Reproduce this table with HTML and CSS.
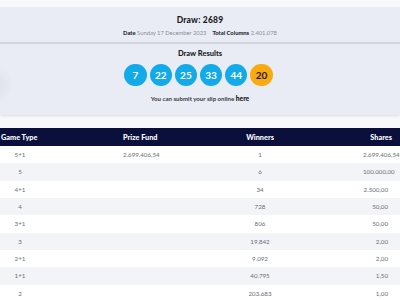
FILE: index.html
```html
<!DOCTYPE html>
<html>
<head>
<meta charset="utf-8">
<link rel="stylesheet" href="styles.css">
</head>
<body>
<section class="draw-panel">
  <h1 class="draw-title">Draw: 2689</h1>
  <p class="draw-meta"><b>Date</b> <span class="muted">Sunday 17 December 2023</span><span class="sep"></span><b>Total Columns</b> <span class="muted">2.401.078</span></p>
</section>
<section class="results-panel">
  <span class="edge-shadow"></span>
  <h2 class="results-title">Draw Results</h2>
  <div class="balls">
    <span class="ball">7</span>
    <span class="ball">22</span>
    <span class="ball">25</span>
    <span class="ball">33</span>
    <span class="ball">44</span>
    <span class="ball bonus">20</span>
  </div>
  <p class="submit">You can submit your slip online <a href="#">here</a></p>
</section>
<div class="table">
  <div class="row head">
    <span class="c1">Game Type</span><span class="c2">Prize Fund</span><span class="c3">Winners</span><span class="c4">Shares</span>
  </div>
  <div class="row"><span class="c1">5+1</span><span class="c2">2.699.406,54</span><span class="c3">1</span><span class="c4">2.699.406,54</span></div>
  <div class="row"><span class="c1">5</span><span class="c2"></span><span class="c3">6</span><span class="c4">100.000,00</span></div>
  <div class="row"><span class="c1">4+1</span><span class="c2"></span><span class="c3">34</span><span class="c4">2.500,00</span></div>
  <div class="row"><span class="c1">4</span><span class="c2"></span><span class="c3">728</span><span class="c4">50,00</span></div>
  <div class="row"><span class="c1">3+1</span><span class="c2"></span><span class="c3">806</span><span class="c4">50,00</span></div>
  <div class="row"><span class="c1">3</span><span class="c2"></span><span class="c3">19.842</span><span class="c4">2,00</span></div>
  <div class="row"><span class="c1">2+1</span><span class="c2"></span><span class="c3">9.092</span><span class="c4">2,00</span></div>
  <div class="row"><span class="c1">1+1</span><span class="c2"></span><span class="c3">40.795</span><span class="c4">1,50</span></div>
  <div class="row"><span class="c1">2</span><span class="c2"></span><span class="c3">203.683</span><span class="c4">1,00</span></div>
</div>
</body>
</html>
```

FILE: styles.css
```css
* { box-sizing: border-box; }
html, body { margin: 0; padding: 0; }
body {
  background: #f8f8fb;
  font-family: Lato, "Noto Sans", sans-serif;
  color: #1d1d24;
  width: 400px;
  height: 300px;
  overflow: hidden;
}
.draw-panel {
  margin-top: 7px;
  height: 37px;
  background: #e9ecf4;
  border-bottom: 2px solid #d2d5de;
  text-align: center;
  padding-top: 7px;
}
.draw-title {
  margin: 0;
  font-size: 8.5px;
  font-weight: 900;
  line-height: 12px;
  letter-spacing: 0.2px;
}
.draw-meta {
  margin: 3px 0 0;
  font-size: 5.8px;
  line-height: 8px;
  color: #2a2a33;
}
.draw-meta b { font-weight: 900; }
.muted { color: #8b8d96; }
.sep { display: inline-block; width: 6px; }
.results-panel {
  position: relative;
  height: 71px;
  background: #e9ecf4;
  box-shadow: 0 1px 2px rgba(40, 40, 60, 0.12);
  text-align: center;
  padding-top: 5px;
}
.edge-shadow {
  position: absolute;
  left: -15px;
  top: 28px;
  width: 22px;
  height: 26px;
  border-radius: 50%;
  background: rgba(200, 202, 210, 0.25);
  filter: blur(3px);
}
.results-title {
  margin: 0;
  font-size: 7.5px;
  font-weight: 900;
  line-height: 10px;
}
.balls {
  display: flex;
  justify-content: center;
  gap: 2.8px;
  margin-top: 5px;
  padding-right: 3px;
}
.ball {
  width: 22.4px;
  height: 22.4px;
  border-radius: 50%;
  background: #12aae9;
  color: #fff;
  font-size: 10px;
  font-weight: 700;
  display: flex;
  align-items: center;
  justify-content: center;
}
.ball.bonus { background: #f8aa10; color: #1b1b1b; }
.submit {
  margin: 8px 0 0;
  font-size: 6.1px;
  font-weight: 700;
  color: #3a3a44;
  line-height: 8px;
}
.submit a { color: #111; font-weight: 900; text-decoration: none; font-size: 6.7px; }
.table { margin-top: 13px; }
.row {
  display: grid;
  grid-template-columns: 40px 160px 120px 80px;
  height: 17.33px;
  align-items: center;
  font-size: 6.2px;
  color: #6b6d75;
  white-space: nowrap;
}
.row:nth-child(odd) { background: #f3f4f7; }
.row:nth-child(even) { background: #ffffff; }
.row.head {
  height: 18px;
  background: #0b0f3b;
  color: #fff;
  font-size: 7.3px;
  font-weight: 900;
}
.c1 { text-align: center; }
.c2 { padding-left: 83px; }
.c3 { text-align: center; }
.c4 { text-align: right; padding-left: 43px; padding-right: 12px; }
.head .c1 { text-align: left; padding-left: 1px; }
.head .c4 { padding-right: 8px; padding-left: 0; }
```
